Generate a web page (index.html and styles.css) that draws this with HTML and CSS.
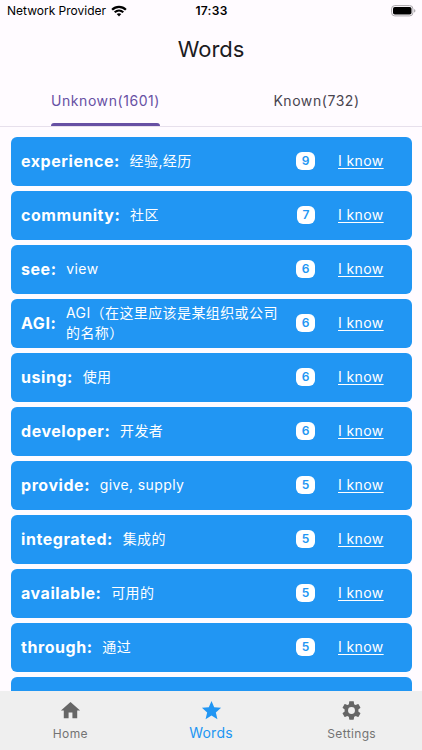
FILE: index.html
```html
<!DOCTYPE html>
<html lang="en">
<head>
<meta charset="utf-8">
<title>Words</title>
<link rel="stylesheet" href="styles.css">
</head>
<body>
<div class="app">
  <header class="status">
    <div class="carrier"><span>Network Provider</span>
      <svg class="wifi" viewBox="0 0 16 12"><path d="M1.1 4.7C5 .9 11 .9 14.9 4.7" fill="none" stroke="#000" stroke-width="2.3"/><path d="M3.7 7.3C6.2 5 9.8 5 12.3 7.3" fill="none" stroke="#000" stroke-width="2.1"/><path d="M5.7 9.1Q8 7.2 10.3 9.1L8 11.5Z"/></svg>
    </div>
    <div class="clock">17:33</div>
    <svg class="battery" viewBox="0 0 25 12"><rect x=".6" y=".6" width="21.3" height="10.3" rx="3.2" fill="none" stroke="#aaa7ab"/><rect x="2" y="2" width="18.5" height="7.5" rx="1.8"/><path d="M23.3 4v3.6q1-.4 1-1.8t-1-1.8Z" fill="#8e8b90"/></svg>
  </header>
  <h1>Words</h1>
  <nav class="tabs">
    <div class="tab active"><span>Unknown(1601)</span></div>
    <div class="tab"><span>Known(732)</span></div>
  </nav>
  <main class="list">
    <div class="card"><b>experience:</b><p>经验,经历</p><i>9</i><a>I know</a></div>
    <div class="card"><b>community:</b><p>社区</p><i class="narrow">7</i><a>I know</a></div>
    <div class="card"><b>see:</b><p>view</p><i>6</i><a>I know</a></div>
    <div class="card"><b>AGI:</b><p>AGI（在这里应该是某组织或公司<br>的名称）</p><i>6</i><a>I know</a></div>
    <div class="card"><b>using:</b><p>使用</p><i>6</i><a>I know</a></div>
    <div class="card"><b>developer:</b><p>开发者</p><i>6</i><a>I know</a></div>
    <div class="card"><b>provide:</b><p>give, supply</p><i>5</i><a>I know</a></div>
    <div class="card"><b>integrated:</b><p>集成的</p><i>5</i><a>I know</a></div>
    <div class="card"><b>available:</b><p>可用的</p><i>5</i><a>I know</a></div>
    <div class="card"><b>through:</b><p>通过</p><i>5</i><a>I know</a></div>
    <div class="card"></div>
  </main>
  <footer class="bottom">
    <div class="item"><svg viewBox="0 0 24 24"><path d="M10 20v-6h4v6h5v-8h3L12 3 2 12h3v8z"/></svg><span>Home</span></div>
    <div class="item selected"><svg viewBox="0 0 24 24"><path d="M12 17.27L18.18 21l-1.64-7.03L22 9.24l-7.19-.61L12 2 9.19 8.63 2 9.24l5.46 4.73L5.82 21z"/></svg><span>Words</span></div>
    <div class="item"><svg viewBox="0 0 24 24"><path d="M19.14 12.94c.04-.3.06-.61.06-.94 0-.32-.02-.64-.07-.94l2.03-1.58c.18-.14.23-.41.12-.61l-1.92-3.32c-.12-.22-.37-.29-.59-.22l-2.39.96c-.5-.38-1.03-.7-1.62-.94l-.36-2.54c-.04-.24-.24-.41-.48-.41h-3.84c-.24 0-.43.17-.47.41l-.36 2.54c-.59.24-1.13.57-1.62.94l-2.39-.96c-.22-.08-.47 0-.59.22L2.74 8.87c-.12.21-.08.47.12.61l2.03 1.58c-.05.3-.09.63-.09.94s.02.64.07.94l-2.03 1.58c-.18.14-.23.41-.12.61l1.92 3.32c.12.22.37.29.59.22l2.39-.96c.5.38 1.03.7 1.62.94l.36 2.54c.05.24.24.41.48.41h3.84c.24 0 .44-.17.47-.41l.36-2.54c.59-.24 1.13-.56 1.62-.94l2.39.96c.22.08.47 0 .59-.22l1.92-3.32c.12-.22.07-.47-.12-.61zM12 15.6a3.6 3.6 0 1 1 0-7.2 3.6 3.6 0 0 1 0 7.2z"/></svg><span>Settings</span></div>
  </footer>
</div>
</body>
</html>
```
FILE: styles.css
```css
* { box-sizing: border-box; }
body { margin: 0; background: #fffbff; font-family: Inter, "Noto Sans CJK SC", sans-serif; color: #1c1b1f; }
.app { width: 422px; height: 750px; display: flex; flex-direction: column; overflow: hidden; }
.status { flex: none; height: 21px; display: grid; grid-template-columns: 1fr auto 1fr; align-items: center; padding: 0 6px 0 7px; color: #000; font-size: 12px; }
.carrier { display: flex; align-items: center; gap: 5px; }
.wifi { width: 16px; height: 12px; }
.clock { font-weight: 600; letter-spacing: .3px; }
.battery { width: 25px; height: 12px; justify-self: end; }
h1 { flex: none; margin: 0; height: 56px; font-size: 22px; line-height: 57px; font-weight: 400; text-align: center; letter-spacing: -.05px; }
.tabs { flex: none; height: 50px; display: flex; border-bottom: 1px solid #e7e0ec; }
.tab { flex: 1; display: flex; justify-content: center; font-size: 14px; font-weight: 400; letter-spacing: .56px; color: #49454f; }
.tab span { height: 50px; line-height: 48px; }
.active { color: #6750a4; }
.active span { display: flex; flex-direction: column; height: 49px; }
.active span::after { content: ""; height: 3px; margin: -2px 0 0; background: #6750a4; border-radius: 3px 3px 0 0; }
.list { flex: 1; min-height: 0; overflow: hidden; padding: 9.7px 10.5px 0; }
.card { height: 49px; margin-bottom: 5px; border-radius: 6px; background: #2196f3; color: #fff; display: flex; align-items: center; padding-left: 10.5px; }
.card b { font-size: 16px; font-weight: 650; letter-spacing: .55px; margin-right: 9.7px; white-space: nowrap; }
.card p { margin: 0; flex: 1; font-size: 14px; line-height: 20px; letter-spacing: .4px; font-weight: 370; white-space: nowrap; }
.card i { width: 19px; height: 18px; border-radius: 6px; background: #fff; color: #2196f3; font-size: 12px; line-height: 18px; font-style: normal; font-weight: 600; text-align: center; margin-right: 23px; }
.card .narrow { width: 18px; }
.card a { width: 73.5px; font-size: 14px; line-height: 18px; padding-bottom: 1px; letter-spacing: .4px; text-decoration: underline; text-underline-offset: 2px; }
.bottom { flex: none; height: 59px; background: #efefef; display: flex; color: #737373; }
.item { flex: 1; display: flex; flex-direction: column; align-items: center; padding-top: 8px; font-size: 12px; letter-spacing: .35px; }
.item svg { width: 23px; height: 23px; fill: #666; }
.item span { line-height: 16px; margin-top: 4px; }
.selected { color: #2196f3; font-size: 14px; letter-spacing: .25px; }
.selected svg { fill: #2196f3; }
.selected span { margin-top: 3px; }
```
